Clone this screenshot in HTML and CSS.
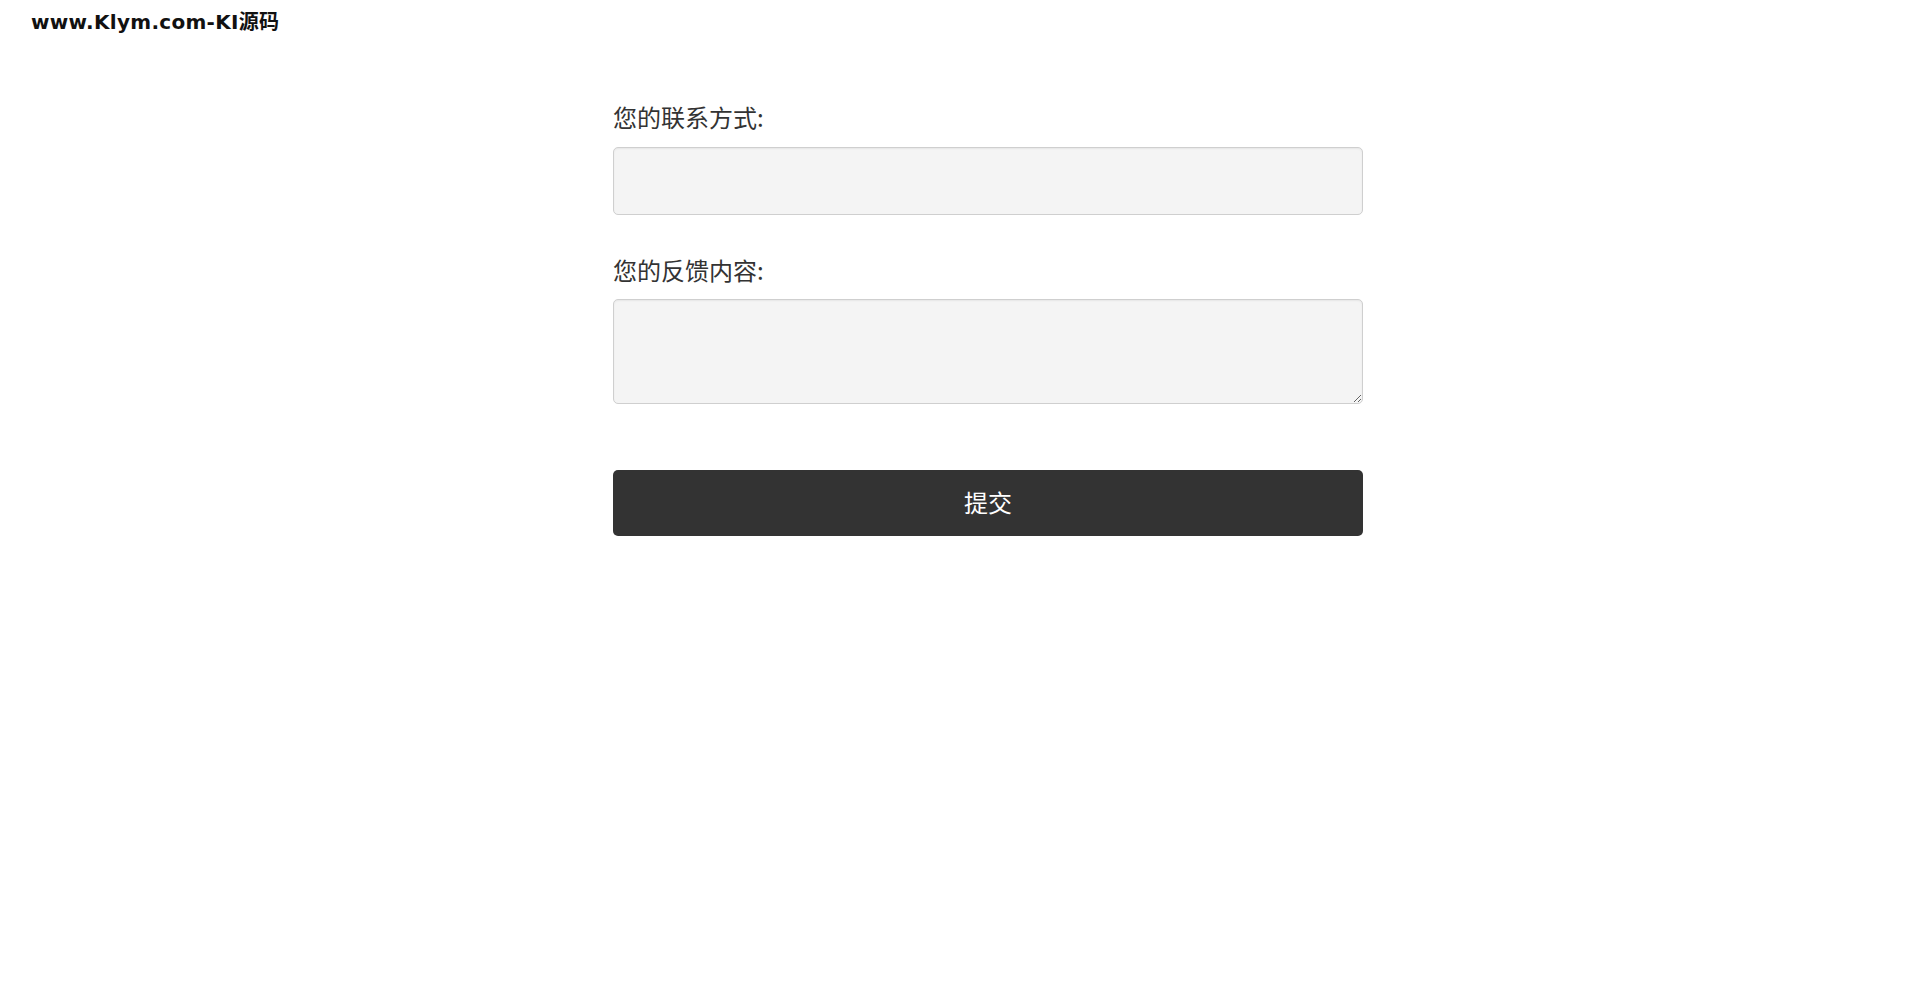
FILE: index.html
```html
<!DOCTYPE html>
<html lang="zh-CN">
<head>
<meta charset="utf-8">
<title>反馈</title>
<link rel="stylesheet" href="styles.css">
</head>
<body>
<header class="top">
  <div class="logo">www.Klym.com-KI源码</div>
</header>
<main class="wrap">
  <form class="feedback">
    <label class="label" for="contact">您的联系方式:</label>
    <input class="field" id="contact" type="text">
    <label class="label label-second" for="content">您的反馈内容:</label>
    <textarea class="field area" id="content"></textarea>
    <button class="submit" type="button">提交</button>
  </form>
</main>
</body>
</html>
```
FILE: styles.css
```css
html, body {
  margin: 0;
  padding: 0;
  background: #fff;
}
body {
  font-family: "Noto Sans CJK SC", "Noto Sans", sans-serif;
  color: #333;
}
.top {
  padding: 10px 0 0 31px;
  height: 40px;
}
.logo {
  font-family: "DejaVu Sans", "Noto Sans CJK SC", sans-serif;
  font-weight: bold;
  font-size: 20px;
  letter-spacing: 0.3px;
  line-height: 24px;
  color: #111;
}
.wrap {
  padding-left: 613px;
  padding-top: 49px;
}
.feedback {
  width: 750px;
  display: flex;
  flex-direction: column;
}
.label {
  display: block;
  font-size: 24px;
  line-height: 36px;
  color: #333;
  margin-bottom: 12px;
}
.label-second {
  margin-top: 37px;
  margin-bottom: 11px;
}
.field {
  box-sizing: border-box;
  width: 750px;
  height: 68px;
  margin: 0;
  border: 1px solid #cfcfcf;
  border-radius: 5px;
  background: #f4f4f4;
  box-shadow: inset 0 1px 2px rgba(0,0,0,0.06);
  font-family: inherit;
  font-size: 20px;
  padding: 8px 12px;
  outline: none;
}
.area {
  height: 105px;
  resize: vertical;
}
.submit {
  margin-top: 66px;
  width: 750px;
  height: 66px;
  padding: 0 0 4px;
  border: none;
  border-radius: 5px;
  background: #333;
  color: #fff;
  font-family: inherit;
  font-size: 24px;
  cursor: pointer;
}
```
